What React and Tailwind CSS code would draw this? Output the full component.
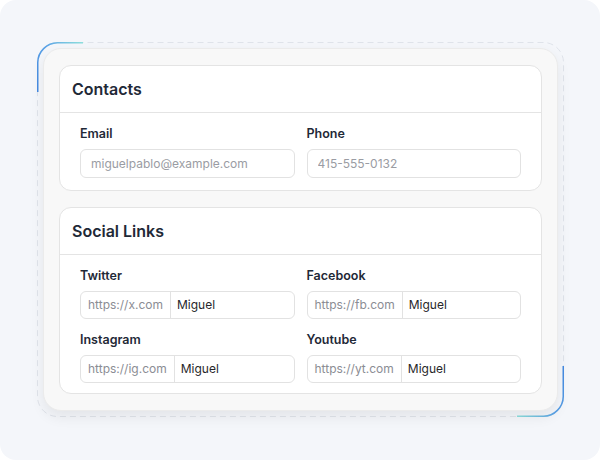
import React from "react";

const Label = ({ children }) => (
  <label className="block text-[12.5px] leading-[18px] font-semibold text-[#1f2937] mb-1.5">
    {children}
  </label>
);

const Field = ({ label, placeholder }) => (
  <div>
    <Label>{label}</Label>
    <input
      type="text"
      readOnly
      placeholder={placeholder}
      className="w-full h-[29px] px-2.5 rounded-md border border-[#e2e2e2] bg-white text-[12px] text-[#27272a] placeholder:text-[#9a9ca3] outline-none"
    />
  </div>
);

const PrefixField = ({ label, prefix, value }) => (
  <div>
    <Label>{label}</Label>
    <div className="flex h-7 rounded-md border border-[#e2e2e2] bg-white text-[12px] overflow-hidden">
      <span className="flex items-center px-[7px] text-[#8b8d94] border-r border-[#e2e2e2]">
        {prefix}
      </span>
      <input
        type="text"
        readOnly
        value={value}
        className="flex-1 min-w-0 px-1.5 text-[#27272a] outline-none"
      />
    </div>
  </div>
);

const Card = ({ title, children, bodyClass }) => (
  <div className="bg-white border border-[#e4e4e4] rounded-xl">
    <div className="h-[47px] flex items-center px-3 border-b border-[#e4e4e4]">
      <h2 className="text-[16px] font-semibold text-[#1f2937]">{title}</h2>
    </div>
    <div className={bodyClass}>{children}</div>
  </div>
);

export default function App() {
  return (
    <div
      className="w-[600px] h-[460px] bg-[#f4f6fa] rounded-2xl pt-[42px] pl-[37px]"
      style={{ fontFamily: "Inter, 'Noto Sans', sans-serif" }}
    >
      <div className="relative w-[527px] h-[375px] p-[6px]">
        {/* dashed frame with accent corners */}
        <svg
          className="absolute inset-0 pointer-events-none"
          width="527"
          height="375"
          viewBox="0 0 527 375"
          fill="none"
        >
          <defs>
            <linearGradient id="tl" x1="0" y1="50" x2="46" y2="0" gradientUnits="userSpaceOnUse">
              <stop offset="0" stopColor="#4388e0" />
              <stop offset="0.6" stopColor="#5aa2e6" />
              <stop offset="1" stopColor="#8ee0dc" />
            </linearGradient>
            <linearGradient id="br" x1="527" y1="324" x2="480" y2="375" gradientUnits="userSpaceOnUse">
              <stop offset="0" stopColor="#4388e0" />
              <stop offset="0.6" stopColor="#5aa2e6" />
              <stop offset="1" stopColor="#8ee0dc" />
            </linearGradient>
          </defs>
          <rect
            x="0.5"
            y="0.5"
            width="526"
            height="374"
            rx="20"
            stroke="#dfe3ea"
            strokeDasharray="6 4"
          />
          <path d="M0.75 50 V20.5 A20 20 0 0 1 20.5 0.75 H46" stroke="url(#tl)" strokeWidth="1.5" />
          <path d="M526.25 324 V354.5 A20 20 0 0 1 506.5 374.25 H480" stroke="url(#br)" strokeWidth="1.5" />
        </svg>

        <div className="relative h-full bg-[#f8f8f8] border border-[#ebebeb] rounded-[18px] shadow-[0_6px_14px_rgba(0,0,0,0.07)] px-[15px] pt-4 pb-[15px] flex flex-col gap-4">
          <Card title="Contacts" bodyClass="px-5 pt-3 pb-3">
            <div className="grid grid-cols-2 gap-3">
              <Field label="Email" placeholder="miguelpablo@example.com" />
              <Field label="Phone" placeholder="415-555-0132" />
            </div>
          </Card>

          <Card title="Social Links" bodyClass="px-5 pt-3 pb-[10px]">
            <div className="grid grid-cols-2 gap-x-3 gap-y-3">
              <PrefixField label="Twitter" prefix="https://x.com" value="Miguel" />
              <PrefixField label="Facebook" prefix="https://fb.com" value="Miguel" />
              <PrefixField label="Instagram" prefix="https://ig.com" value="Miguel" />
              <PrefixField label="Youtube" prefix="https://yt.com" value="Miguel" />
            </div>
          </Card>
        </div>
      </div>
    </div>
  );
}
